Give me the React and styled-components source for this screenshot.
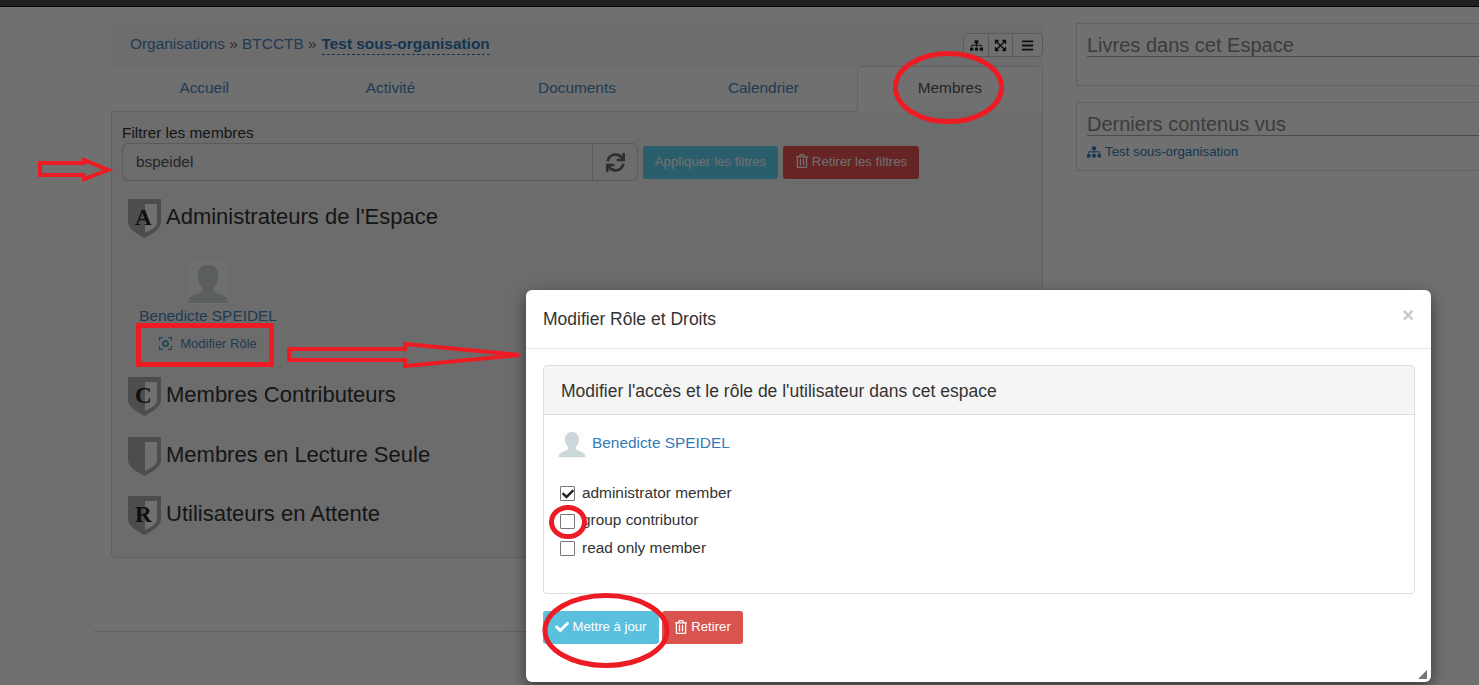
import React from "react";
import styled, { createGlobalStyle } from "styled-components";
import { FaSitemap, FaExpandArrowsAlt, FaBars, FaSync, FaRegTrashAlt, FaCheck } from "react-icons/fa";

const Global = createGlobalStyle`
  html, body { margin: 0; padding: 0; height: 685px; overflow: hidden; background: #fff; }
  body { font-family: "Liberation Sans", Arial, sans-serif; font-size: 15.4px; color: #333; }
  * { box-sizing: border-box; }
`;

const Page = styled.div`
  position: relative;
  width: 1479px;
  height: 685px;
  overflow: hidden;
`;
const TopBar = styled.div`
  height: 7px;
  background: #4a4a4a;
  border-bottom: 1px solid #000;
`;
const Columns = styled.div`
  display: flex;
  align-items: flex-start;
  padding: 17px 0 0 111px;
`;
const Main = styled.main`
  flex: none;
  width: 932px;
`;
const Crumbs = styled.div`
  height: 42px;
  display: flex;
  justify-content: space-between;
  padding: 9px 0 0 19px;
  background: #f9f9f9;
  border-radius: 6px 6px 0 0;
`;
const CrumbText = styled.div`
  line-height: 22px;
  color: #666;
  a { color: #4a86bb; text-decoration: none; }
`;
const CrumbCurrent = styled.a`
  display: inline-block;
  margin-left: 5px;
  line-height: 20px;
  font-weight: 700;
  border-bottom: 1px dashed #337ab7;
  color: #337ab7 !important;
`;
const ToolGroup = styled.div`
  display: flex;
  height: 24px;
  border: 1px solid #ccc;
  border-radius: 4px;
  background: #fff;
`;
const ToolButton = styled.span`
  display: flex;
  align-items: center;
  justify-content: center;
  width: ${(p) => p.$w}px;
  color: #222;
  font-size: 13px;
  & + & { border-left: 1px solid #ccc; }
`;
const Tabs = styled.nav`
  display: grid;
  grid-template-columns: repeat(5, 1fr);
  height: 45px;
`;
const Tab = styled.div`
  display: flex;
  align-items: center;
  justify-content: center;
  padding-bottom: 2px;
  color: ${(p) => (p.$active ? "#555" : "#4a86bb")};
  background: ${(p) => (p.$active ? "#fff" : "transparent")};
  border: 1px solid ${(p) => (p.$active ? "#ddd" : "transparent")};
  border-bottom: 1px solid ${(p) => (p.$active ? "#fff" : "#ddd")};
  border-radius: 4px 4px 0 0;
  margin-bottom: -1px;
  position: relative;
`;
const TabPane = styled.section`
  height: 447px;
  padding: 12px 10px 0 10px;
  background: #f6f6f6;
  border: 1px solid #ddd;
  border-radius: 0 0 4px 4px;
`;
const FilterLabel = styled.div`
  line-height: 18px;
  color: #333;
`;
const FilterRow = styled.div`
  display: flex;
  align-items: center;
  height: 38px;
  margin-top: 1px;
`;
const FilterInput = styled.div`
  width: 470px;
  height: 38px;
  padding: 0 13px;
  line-height: 35px;
  color: #555;
  border: 1px solid #ccc;
  border-right: none;
  border-radius: 6px 0 0 6px;
`;
const Addon = styled.div`
  width: 46px;
  height: 38px;
  display: flex;
  align-items: center;
  justify-content: center;
  border: 1px solid #ccc;
  border-radius: 0 6px 6px 0;
  font-size: 19px;
  color: #666;
`;
const Button = styled.div`
  display: inline-flex;
  align-items: center;
  justify-content: center;
  gap: 3px;
  width: ${(p) => p.$w}px;
  height: 33px;
  margin-left: ${(p) => p.$ml}px;
  padding-bottom: 2px;
  font-size: 13.2px;
  color: #fff;
  background: ${(p) => (p.$kind === "danger" ? "#d9534f" : "#5bc0de")};
  border-radius: 3px;
  svg { font-size: 14px; }
`;
const DimButton = styled(Button)`
  background: ${(p) => (p.$kind === "danger" ? "#e85252" : "#62d5f5")};
`;
const RoleHeading = styled.div`
  display: flex;
  align-items: center;
  height: 40px;
  margin: ${(p) => p.$mt}px 0 0 6px;
`;
const ShieldBox = styled.div`
  position: relative;
  flex: none;
  width: 33px;
  height: 40px;
  margin-right: 5px;
`;
const ShieldLetter = styled.span`
  position: absolute;
  left: 7px;
  top: 7px;
  font-family: "Liberation Serif", serif;
  font-weight: 700;
  font-size: 23px;
  line-height: 26px;
  color: #222;
`;
const RoleTitle = styled.h3`
  margin: 0 0 2px;
  font-size: 22px;
  font-weight: 400;
  color: #333;
`;
const Member = styled.div`
  width: 150px;
  margin: 24px 0 0 11px;
  display: flex;
  flex-direction: column;
  align-items: center;
`;
const MemberName = styled.a`
  margin-top: 2px;
  line-height: 20px;
  color: #4a86bb;
  white-space: nowrap;
`;
const RoleLink = styled.div`
  display: flex;
  align-items: center;
  gap: 8px;
  height: 34px;
  padding-top: 1px;
  font-size: 13px;
  color: #4a86bb;
`;
const AvatarBox = styled.div`
  width: ${(p) => p.$s}px;
  height: ${(p) => p.$s}px;
  flex: none;
  background: #fdfdfd;
`;

const Side = styled.aside`
  flex: none;
  width: 420px;
  margin-left: 33px;
  margin-top: -1px;
`;
const SideCard = styled.div`
  height: ${(p) => p.$h}px;
  margin-bottom: 16px;
  padding: 9px 10px 0;
  border: 1px solid #ddd;
`;
const SideTitle = styled.h4`
  margin: 0;
  height: 24px;
  font-size: 20px;
  line-height: 25px;
  font-weight: 400;
  color: #888;
  border-bottom: 1px solid #aaa;
`;
const SideLink = styled.div`
  display: flex;
  align-items: center;
  gap: 4px;
  margin-top: 8px;
  font-size: 13.3px;
  color: #337ab7;
`;
const FooterRule = styled.hr`
  width: 1000px;
  margin: 73px 0 0 94px;
  border: none;
  border-top: 1px solid #ddd;
`;

const Backdrop = styled.div`
  position: absolute;
  inset: 0;
  background: rgba(0, 0, 0, 0.56);
`;
const Modal = styled.div`
  position: absolute;
  left: 526px;
  top: 290px;
  width: 905px;
  height: 392px;
  background: #fff;
  border-radius: 6px;
  box-shadow: 0 5px 15px rgba(0, 0, 0, 0.5);
`;
const ModalHeader = styled.header`
  height: 59px;
  display: flex;
  align-items: center;
  justify-content: space-between;
  padding: 0 17px;
  border-bottom: 1px solid #e5e5e5;
`;
const ModalTitle = styled.h4`
  margin: 0;
  font-size: 17.5px;
  font-weight: 400;
  color: #333;
`;
const Close = styled.span`
  font-size: 20px;
  font-weight: 700;
  color: #c8c8c8;
  line-height: 20px;
  margin-bottom: 8px;
`;
const ModalBody = styled.div`
  padding: 16px 16px 0 17px;
`;
const Card = styled.div`
  height: 229px;
  border: 1px solid #ddd;
  border-radius: 4px;
`;
const CardHead = styled.div`
  height: 49px;
  display: flex;
  align-items: center;
  padding: 2px 17px 0;
  background: #f5f5f5;
  border-bottom: 1px solid #ddd;
  border-radius: 4px 4px 0 0;
  font-size: 17.5px;
  color: #333;
`;
const CardBody = styled.div`
  padding: 15px 14px;
`;
const UserRow = styled.div`
  display: flex;
  align-items: center;
  gap: 6px;
  color: #337ab7;
  padding-bottom: 2px;
  a { position: relative; top: -1px; }
`;
const Checks = styled.div`
  display: flex;
  flex-direction: column;
  margin-top: 19px;
`;
const CheckRow = styled.label`
  display: flex;
  align-items: center;
  height: 27.5px;
  gap: 7px;
  color: #333;
`;
const CheckBox = styled.span`
  width: 15px;
  height: 15px;
  margin: 2px 0 0 2px;
  display: flex;
  align-items: center;
  justify-content: center;
  border: 1px solid #777;
  border-radius: 1px;
  background: #fff;
  font-size: 12px;
  color: #222;
`;
const ModalActions = styled.div`
  display: flex;
  margin-top: 17px;
`;
const ResizeMark = styled.svg`
  position: absolute;
  right: 4px;
  bottom: 3px;
`;
const Marks = styled.svg`
  position: absolute;
  left: 0;
  top: 0;
  pointer-events: none;
`;

const Shield = ({ letter }) => (
  <ShieldBox>
    <svg width="33" height="40" viewBox="0 0 33 40">
      <path d="M0 1h33v23c0 7-9 12-16.500 16C9 36 0 31 0 24z" fill="#afafaf" />
      <path d="M17 6h12v18c0 5-6 8-12 11z" fill="#fff" />
    </svg>
    {letter && <ShieldLetter>{letter}</ShieldLetter>}
  </ShieldBox>
);

const Avatar = ({ s }) => (
  <AvatarBox $s={s}>
    <svg width={s} height={s} viewBox="0 0 44 44">
      <path d="M22 3c7 0 11 5 11 12 0 5-2 9-5 12v3c2 3 10 4 14 8l1 5H1l1-5c4-4 12-5 14-8v-3c-3-3-5-7-5-12 0-7 4-12 11-12z" fill="#ccd7d9" />
    </svg>
  </AvatarBox>
);

const RoleIcon = () => (
  <svg width="13" height="13" viewBox="0 0 13 13" fill="none" stroke="#49a5c4">
    <path d="M.5 4V.5H4M9 .5h3.500V4M12.500 9v3.500H9M4 12.500H.5V9" strokeWidth="1.500" />
    <circle cx="6.500" cy="6.500" r="2.500" strokeWidth="2" />
  </svg>
);

const roles = [
  { letter: "C", title: "Membres Contributeurs", mt: 16 },
  { title: "Membres en Lecture Seule", mt: 20 },
  { letter: "R", title: "Utilisateurs en Attente", mt: 19 },
];

export default function App() {
  return (
    <Page>
      <Global />
      <TopBar />
      <Columns>
        <Main>
          <Crumbs>
            <CrumbText>
              <a>Organisations</a> » <a>BTCCTB</a> »<CrumbCurrent>Test sous-organisation</CrumbCurrent>
            </CrumbText>
            <ToolGroup>
              <ToolButton $w={24}><FaSitemap /></ToolButton>
              <ToolButton $w={24}><FaExpandArrowsAlt /></ToolButton>
              <ToolButton $w={30}><FaBars /></ToolButton>
            </ToolGroup>
          </Crumbs>
          <Tabs>
            <Tab>Accueil</Tab>
            <Tab>Activité</Tab>
            <Tab>Documents</Tab>
            <Tab>Calendrier</Tab>
            <Tab $active>Membres</Tab>
          </Tabs>
          <TabPane>
            <FilterLabel>Filtrer les membres</FilterLabel>
            <FilterRow>
              <FilterInput>bspeidel</FilterInput>
              <Addon><FaSync /></Addon>
              <DimButton $w={135} $ml={5}>Appliquer les filtres</DimButton>
              <DimButton $w={136} $ml={5} $kind="danger"><FaRegTrashAlt />Retirer les filtres</DimButton>
            </FilterRow>
            <RoleHeading $mt={17}>
              <Shield letter="A" />
              <RoleTitle>Administrateurs de l'Espace</RoleTitle>
            </RoleHeading>
            <Member>
              <Avatar s={42} />
              <MemberName>Benedicte SPEIDEL</MemberName>
              <RoleLink><RoleIcon />Modifier Rôle</RoleLink>
            </Member>
            {roles.map((r) => (
              <RoleHeading key={r.title} $mt={r.mt}>
                <Shield letter={r.letter} />
                <RoleTitle>{r.title}</RoleTitle>
              </RoleHeading>
            ))}
          </TabPane>
        </Main>
        <Side>
          <SideCard $h={63}>
            <SideTitle>Livres dans cet Espace</SideTitle>
          </SideCard>
          <SideCard $h={69}>
            <SideTitle>Derniers contenus vus</SideTitle>
            <SideLink><FaSitemap size={14} />Test sous-organisation</SideLink>
          </SideCard>
        </Side>
      </Columns>
      <FooterRule />
      <Backdrop />
      <Modal>
        <ModalHeader>
          <ModalTitle>Modifier Rôle et Droits</ModalTitle>
          <Close>×</Close>
        </ModalHeader>
        <ModalBody>
          <Card>
            <CardHead>Modifier l'accès et le rôle de l'utilisateur dans cet espace</CardHead>
            <CardBody>
              <UserRow><Avatar s={28} /><a>Benedicte SPEIDEL</a></UserRow>
              <Checks>
                <CheckRow><CheckBox><FaCheck /></CheckBox>administrator member</CheckRow>
                <CheckRow><CheckBox />group contributor</CheckRow>
                <CheckRow><CheckBox />read only member</CheckRow>
              </Checks>
            </CardBody>
          </Card>
          <ModalActions>
            <Button $w={116} $ml={0}><FaCheck />Mettre à jour</Button>
            <Button $w={81} $ml={3} $kind="danger"><FaRegTrashAlt />Retirer</Button>
          </ModalActions>
        </ModalBody>
        <ResizeMark width="9" height="9" viewBox="0 0 9 9">
          <path d="M9 0v9H0z" fill="#777" />
        </ResizeMark>
      </Modal>
      <Marks width="1479" height="685" viewBox="0 0 1479 685" fill="none" stroke="#ed1c24" strokeWidth="5">
        <ellipse cx="948.500" cy="87.500" rx="53" ry="34" />
        <ellipse cx="568" cy="522" rx="16.500" ry="14.500" />
        <ellipse cx="606" cy="630.500" rx="61" ry="35" />
        <rect x="138.500" y="325.500" width="133" height="39" />
        <path d="M40 163h44v-3l24 10-24 9v-4H40z" strokeWidth="4" />
        <path d="M289 349h116v-5l115 11-115 11v-6H289z" strokeWidth="4" />
      </Marks>
    </Page>
  );
}
